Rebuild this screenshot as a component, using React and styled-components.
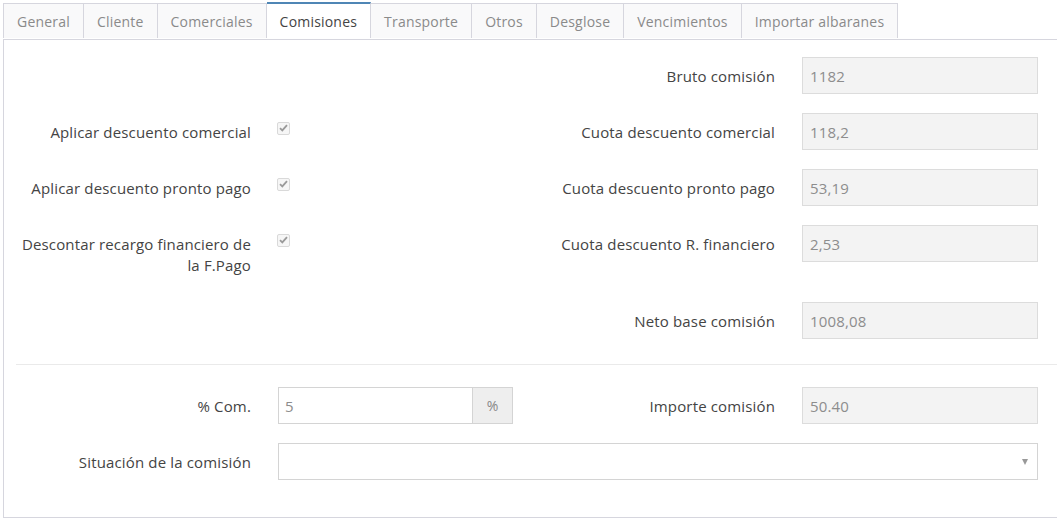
import React from 'react'
import styled, { createGlobalStyle } from 'styled-components';

const GlobalStyle = createGlobalStyle`
    html, body {
        margin: 0;
        padding: 0;
        background: #fff;
        overflow: hidden;
    }
    body {
        font-family: "Open Sans", "Liberation Sans", sans-serif;
        font-size: 15px;
        letter-spacing: 0.15px;
        color: #444;
    }
`;

const Page = styled.div`
    padding: 3px 0 0 3px;
    width: 1070px;
`;

const TabBar = styled.div`
    display: flex;
    border-bottom: 1px solid #d6d6de;
    height: 36px;
`;

const Tab = styled.div`
    height: ${props => props.active ? '36px' : '35px'};
    margin-top: ${props => props.active ? '-1px' : '0'};
    box-sizing: border-box;
    display: flex;
    align-items: center;
    padding: 0 13px;
    font-size: 14px;
    letter-spacing: 0.2px;
    border: 1px solid #d6d6de;
    border-left: ${props => props.first ? '1px solid #d6d6de' : 'none'};
    border-top: ${props => props.active ? '2px solid #4f86b5' : '1px solid #d6d6de'};
    border-bottom: none;
    background: ${props => props.active ? '#fff' : '#f9f9fa'};
    color: ${props => props.active ? '#444' : '#8a8a8a'};
    white-space: nowrap;
    position: relative;
    z-index: 1;
    padding-top: ${props => props.active ? '1px' : '0'};
`;

const Panel = styled.div`
    border-left: 1px solid #d6d6de;
    border-bottom: 1px solid #d6d6de;
    padding: 17px 0 37px 12px;
`;

const Row = styled.div`
    display: grid;
    grid-template-columns: 235px 235px 235px 236px;
    column-gap: 27px;
    margin-bottom: ${props => props.mb ?? 19}px;
`;

const Label = styled.div`
    grid-column: ${props => props.col};
    text-align: right;
    line-height: 21px;
    padding: 9px 0 7px;
    color: #444;
`;

const CheckCell = styled.div`
    grid-column: 2;
    padding-top: 3px;
    margin-left: -1px;
`;

const CheckBox = styled.span`
    display: inline-flex;
    align-items: center;
    justify-content: center;
    width: 11px;
    height: 11px;
    border: 1px solid #d9d9d9;
    border-radius: 2px;
    background: #f6f6f6;
`;

const Input = styled.div`
    grid-column: ${props => props.col || 4} / span ${props => props.span || 1};
    align-self: start;
    height: 37px;
    box-sizing: border-box;
    border: 1px solid ${props => props.disabled ? '#dcdcdc' : '#d4d4d4'};
    background: ${props => props.disabled ? '#f3f3f3' : '#fff'};
    color: #8d8d8d;
    display: flex;
    align-items: center;
    padding: 0 7px;
`;

const InputGroup = styled.div`
    grid-column: 2;
    display: flex;
    height: 37px;
`;

const GroupField = styled.div`
    flex: 1;
    box-sizing: border-box;
    border: 1px solid #d4d4d4;
    border-right: none;
    display: flex;
    align-items: center;
    padding: 0 6px;
    color: #8d8d8d;
`;

const Addon = styled.div`
    width: 41px;
    box-sizing: border-box;
    border: 1px solid #d4d4d4;
    background: #eee;
    color: #888;
    display: flex;
    align-items: center;
    justify-content: center;
    font-size: 14px;
`;

const Select = styled(Input)`
    justify-content: flex-end;
    padding-right: 9px;
    background: #fff;
`;

const Arrow = styled.span`
    width: 0;
    height: 0;
    border-left: 3px solid transparent;
    border-right: 3px solid transparent;
    border-top: 6px solid #999;
`;

const Divider = styled.div`
    height: 1px;
    background: #eaeaea;
    margin: 25px 0 22px;
`;

const Check = () => (
    <CheckCell>
        <CheckBox>
            <svg width="9" height="8" viewBox="0 0 9 8">
                <path d="M1 4.2 L3.3 6.4 L8 1.2" fill="none" stroke="#9a9a9a" strokeWidth="1.8" />
            </svg>
        </CheckBox>
    </CheckCell>
)

const tabs = ['General', 'Cliente', 'Comerciales', 'Comisiones', 'Transporte', 'Otros', 'Desglose', 'Vencimientos', 'Importar albaranes'];

export default function App() {
    return (
        <Page>
            <GlobalStyle />
            <TabBar>
                {tabs.map((t, i) => (
                    <Tab key={t} first={i === 0} active={t === 'Comisiones'}>{t}</Tab>
                ))}
            </TabBar>
            <Panel>
                <Row>
                    <Label col={3}>Bruto comisión</Label>
                    <Input disabled>1182</Input>
                </Row>
                <Row>
                    <Label col={1}>Aplicar descuento comercial</Label>
                    <Check />
                    <Label col={3}>Cuota descuento comercial</Label>
                    <Input disabled>118,2</Input>
                </Row>
                <Row>
                    <Label col={1}>Aplicar descuento pronto pago</Label>
                    <Check />
                    <Label col={3}>Cuota descuento pronto pago</Label>
                    <Input disabled>53,19</Input>
                </Row>
                <Row>
                    <Label col={1}>Descontar recargo financiero de la F.Pago</Label>
                    <Check />
                    <Label col={3}>Cuota descuento R. financiero</Label>
                    <Input disabled>2,53</Input>
                </Row>
                <Row>
                    <Label col={3}>Neto base comisión</Label>
                    <Input disabled>1008,08</Input>
                </Row>
                <Divider />
                <Row>
                    <Label col={1}>% Com.</Label>
                    <InputGroup>
                        <GroupField>5</GroupField>
                        <Addon>%</Addon>
                    </InputGroup>
                    <Label col={3}>Importe comisión</Label>
                    <Input disabled>50.40</Input>
                </Row>
                <Row mb={0}>
                    <Label col={1}>Situación de la comisión</Label>
                    <Select col={2} span={3}><Arrow /></Select>
                </Row>
            </Panel>
        </Page>
    )
}
